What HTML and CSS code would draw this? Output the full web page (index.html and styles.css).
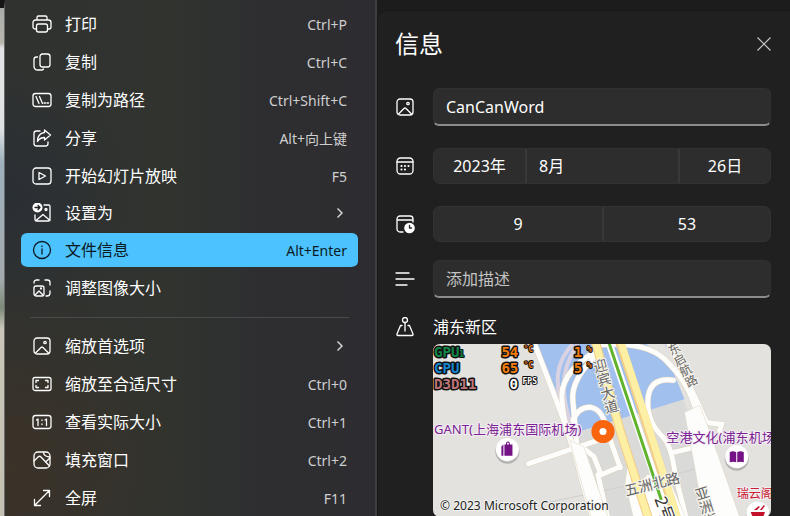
FILE: index.html
```
<!DOCTYPE html>
<html lang="zh-CN">
<head>
<meta charset="utf-8">
<title>信息</title>
<link rel="stylesheet" href="styles.css">
</head>
<body>
<div class="app">
  <div class="photo-edge"></div>
  <nav class="menu">
    <button class="item"><svg class="icon" viewBox="0 0 20 20"><path d="M5 6V3.500a1.500 1.500 0 0 1 1.500-1.500h7A1.500 1.500 0 0 1 15 3.500V6M4.500 15H3a2 2 0 0 1-2-2V8.500A2.500 2.500 0 0 1 3.500 6h13A2.500 2.500 0 0 1 19 8.500V13a2 2 0 0 1-2 2h-1.500"/><rect x="4.500" y="10" width="11" height="8" rx="2"/></svg><span class="label">打印</span><span class="key">Ctrl+P</span></button>
    <button class="item"><svg class="icon" viewBox="0 0 20 20"><rect x="8" y="2" width="10" height="13" rx="2.500"/><path d="M5.500 5H4.500A2.500 2.500 0 0 0 2 7.500V14.500A3.500 3.500 0 0 0 5.500 18H9a2.500 2.500 0 0 0 2.500-1"/></svg><span class="label">复制</span><span class="key">Ctrl+C</span></button>
    <button class="item"><svg class="icon" viewBox="0 0 20 20"><rect x="1" y="3.500" width="18" height="13" rx="2.500"/><path d="M4 6.500l3 7M7.500 6.500l3 7M12 13h1.500M15 13h1.500"/></svg><span class="label">复制为路径</span><span class="key">Ctrl+Shift+C</span></button>
    <button class="item"><svg class="icon" viewBox="0 0 20 20"><path d="M8 3H4.500A2.500 2.500 0 0 0 2 5.500v10A2.500 2.500 0 0 0 4.500 18h9a2.500 2.500 0 0 0 2.500-2.500V14"/><path d="M12.500 2l6 5-6 5V9.500C9 9.500 7 11 5.500 13.500 5.500 8 8.500 5 12.500 4.500z"/></svg><span class="label">分享</span><span class="key">Alt+向上键</span></button>
    <button class="item"><svg class="icon" viewBox="0 0 20 20"><rect x="1" y="2" width="18" height="16" rx="3"/><path d="M7 6.500v7l6.500-3.500z"/></svg><span class="label">开始幻灯片放映</span><span class="key">F5</span></button>
    <button class="item item-short"><svg class="icon" viewBox="0 0 20 20"><path d="M12 2h4.500A1.500 1.500 0 0 1 18 3.500v13a1.500 1.500 0 0 1-1.500 1.500h-12A1.500 1.500 0 0 1 3 16.500V12M4 17.500l7-6 7 6"/><circle cx="14" cy="6.500" r="1"/><circle class="fill" cx="5.500" cy="4.500" r="5"/><path class="cut" d="M3 4.500h5M6 2.500l2 2-2 2"/></svg><span class="label">设置为</span><svg class="chevron" viewBox="0 0 8 12"><path d="M1.500 1.500L6 6l-4.500 4.500"/></svg></button>
    <button class="item item-active"><svg class="icon" viewBox="0 0 20 20"><circle cx="10" cy="10" r="8.500"/><path d="M10 9v5M10 6v.5"/></svg><span class="label">文件信息</span><span class="key">Alt+Enter</span></button>
    <button class="item"><svg class="icon" viewBox="0 0 20 20"><path d="M2 5V4A2.500 2.500 0 0 1 4.500 2H7M13 2h2.500A2.500 2.500 0 0 1 18 4.500V7M18 13v2a3 3 0 0 1-3 3h-1"/><rect x="2" y="8" width="10" height="10" rx="2"/><path d="M3 17l4-4 4 4"/><circle cx="9" cy="10.500" r=".5"/></svg><span class="label">调整图像大小</span></button>
    <hr class="rule">
    <button class="item"><svg class="icon" viewBox="0 0 20 20"><rect x="2" y="2" width="16" height="16" rx="3"/><path d="M3.500 17l5.500-5.500q1-1 2 0l5.500 5.500"/><circle cx="13" cy="6.500" r="1.200"/></svg><span class="label">缩放首选项</span><svg class="chevron" viewBox="0 0 8 12"><path d="M1.500 1.500L6 6l-4.500 4.500"/></svg></button>
    <button class="item"><svg class="icon" viewBox="0 0 20 20"><rect x="1" y="3.500" width="18" height="13" rx="2"/><path d="M4 8.500V6.500h2.500M13.500 6.500H16v2M16 11.500v2h-2.500M6.500 13.500H4v-2"/></svg><span class="label">缩放至合适尺寸</span><span class="key">Ctrl+0</span></button>
    <button class="item"><svg class="icon" viewBox="0 0 20 20"><rect x="1" y="3.500" width="18" height="13" rx="2.500"/><path d="M4.500 8l1.500-1v6.500M13 8l1.500-1v6.500M10 8v.5M10 12v.5"/></svg><span class="label">查看实际大小</span><span class="key">Ctrl+1</span></button>
    <button class="item"><svg class="icon" viewBox="0 0 20 20"><rect x="2" y="2" width="16" height="16" rx="4"/><path d="M2 11l4-4q1.500-1.500 3 0l8.500 9M11.500 2.500q.5 4 6 4.500M13.500 12l4.500-4"/></svg><span class="label">填充窗口</span><span class="key">Ctrl+2</span></button>
    <button class="item"><svg class="icon" viewBox="0 0 20 20"><path d="M2.500 17.500l15-15M11.500 2.500h6v6M2.500 11.500v6h6"/></svg><span class="label">全屏</span><span class="key">F11</span></button>
  </nav>
  <main class="stage">
    <section class="panel">
      <header class="head">
        <h1 class="title">信息</h1>
        <button class="close" aria-label="关闭"><svg class="cross" viewBox="0 0 14 14"><path d="M.5.5l13 13M13.500.5l-13 13"/></svg></button>
      </header>
      <div class="row">
        <label for="name" class="mark"><svg class="icon" viewBox="0 0 20 20"><rect x="2" y="2" width="16" height="16" rx="3"/><path d="M3.500 17l5.500-5.500q1-1 2 0l5.500 5.500"/><circle cx="13" cy="6.500" r="1.200"/></svg></label>
        <input id="name" class="field" type="text" value="CanCanWord">
      </div>
      <div class="row">
        <span class="mark"><svg class="icon" viewBox="0 0 20 20"><rect x="2" y="2" width="16" height="16" rx="3.500"/><path d="M2 6h16"/><path class="dots" d="M6.500 10h0M10 10h0M13.500 10h0M6.500 13.500h0M10 13.500h0"/></svg></span>
        <div class="picker date"><button class="part">2023年</button><button class="part part-start">8月</button><button class="part">26日</button></div>
      </div>
      <div class="row">
        <span class="mark"><svg class="icon" viewBox="0 0 20 20"><path d="M8 18H5a3 3 0 0 1-3-3V5a3 3 0 0 1 3-3h10a3 3 0 0 1 3 3v3M2 6h16"/><circle class="fill" cx="14.500" cy="14" r="5.300"/><path class="cut" d="M14.500 11.500V14h2"/></svg></span>
        <div class="picker time"><button class="part">9</button><button class="part">53</button></div>
      </div>
      <div class="row row-tight">
        <label for="desc" class="mark"><svg class="icon" viewBox="0 0 20 20"><path d="M1 4h13M1 10h18M1 16h11"/></svg></label>
        <input id="desc" class="field" type="text" placeholder="添加描述">
      </div>
      <div class="row place-row">
        <span class="mark"><svg class="icon" viewBox="0 0 20 20"><circle cx="10" cy="3" r="2.500"/><path d="M10 5.500V14M7 8.500H5.500L2 17q-.4 1.500 1 1.500h14q1.400 0 1-1.500L14.500 8.500H13"/></svg></span>
        <span class="place">浦东新区</span>
      </div>
      <div class="map">
        <svg class="map-art" viewBox="433 344 338 172" preserveAspectRatio="xMinYMin slice">
          <rect class="land" x="433" y="344" width="338" height="172"/>
          <path class="block" d="M575 431L682 399L700 450L722 516H592z"/>
          <path class="water" d="M534 344H645L668 362L683 399L575 432z"/>
          <path class="lane" d="M545 502L640 482M668 475L706 465"/>
          <g class="lilac"><path d="M572 344Q557 360 557 380T567 425M577 344Q563 364 563 385T571 425"/><path d="M664 344Q678 360 685 382"/></g>
          <g class="edge">
            <path d="M534 344Q556 400 572 445L582 483L592 518"/>
            <path d="M597 350Q562 370 561 395Q561 415 571 445M598 353Q570 378 572 400L576 445M572 420Q578 406 590 407Q602 409 606 430L619 467"/>
            <path d="M528 463L602 438M583 448L593 456L600 474L619 466M597 474L607 518"/>
            <path d="M598 345Q650 340 669 365Q690 386 697 420M672 380Q650 377 647 396Q644 420 662 437Q670 445 674 475L685 518M668 344L695 400L705 422L720 424L718 430M671 452L696 446"/>
          </g>
          <g class="road">
            <path d="M534 344Q556 400 572 445L582 483L592 518"/>
            <path d="M597 350Q562 370 561 395Q561 415 571 445M598 353Q570 378 572 400L576 445M572 420Q578 406 590 407Q602 409 606 430L619 467"/>
            <path d="M528 463L602 438M583 448L593 456L600 474L619 466M597 474L607 518"/>
            <path d="M598 345Q650 340 669 365Q690 386 697 420M672 380Q650 377 647 396Q644 420 662 437Q670 445 674 475L685 518M668 344L695 400L705 422L720 424L718 430M671 452L696 446"/>
          </g>
          <path class="wide" d="M569 440L583 446L607 516H590zM683 412L698 405L706 425L738 516H702L692 460zM627 460L632 490L646 474L666 474L684 516H632L624 482z"/>
          <path class="casing" d="M607 340L664 507"/>
          <path class="amber" d="M594 340L619 430L648 520M618 340L641 410L676 520"/>
          <path class="yellow" d="M594 340L619 430L648 520"/>
          <path class="yellow" d="M619 340L642 410L677 520"/>
          <path class="green" d="M607 340L660 499"/>
          <text class="street street-large stack" transform="translate(597 359) rotate(-15)">迎宾大道</text>
          <text class="street stack" transform="translate(669 344) rotate(-28)">东启航路</text>
          <text class="street street-large" transform="translate(625 495) rotate(-14)">五洲北路</text>
          <text class="street street-large stack" transform="translate(698 486) rotate(-17)">亚洲街</text>
          <text class="route" transform="translate(653 498) rotate(70)">2号</text>
          <text class="poi" x="434" y="433">GANT(上海浦东国际机场)</text>
          <text class="poi" x="665" y="441">空港文化(浦东机场</text>
          <text class="poi poi-red" x="735" y="497">瑞云阁</text>
          <circle class="shade" cx="507" cy="451" r="12"/><circle class="pin" cx="507" cy="449" r="11.500"/>
          <path class="plum" d="M501 446l2-2v11h-2zM504 444h1.500q0-3 2-3t2 3H512v11h-8zM506.500 444h2q0-2-1-2t-1 2z"/>
          <circle class="shade" cx="735" cy="458" r="12"/><circle class="pin" cx="735" cy="456" r="11.500"/>
          <path class="plum" d="M728 451.500q3-1.500 6.500 0v10q-3-1-6.500 0zM735.500 451.500q3-1.500 6.500 0v10q-3-1-6.500 0z"/>
          <circle class="shade" cx="756" cy="514" r="12"/><circle class="pin" cx="756" cy="512" r="11.500"/>
          <path class="bowl" d="M749 511h14q-1 5-4 6h-6q-3-1-4-6zM752 509l5-4 1 1-3 3zM758 509l4-5 1 1-3 4z"/>
          <circle class="here" cx="602" cy="431" r="11.500"/><circle class="pin" cx="602" cy="431" r="3.500"/>
          <g class="osd">
            <text class="gpu" x="434" y="357">GPU</text><text class="gpu tiny" x="459" y="357">1</text>
            <text class="hot" x="501" y="357">54</text><text class="hot tiny" x="523" y="352">°C</text>
            <text class="hot" x="573" y="357">1</text><text class="hot tiny" x="586" y="352">%</text>
            <text class="cpu" x="434" y="373">CPU</text>
            <text class="hot" x="501" y="373">65</text><text class="hot tiny" x="523" y="368">°C</text>
            <text class="hot" x="573" y="373">5</text><text class="hot tiny" x="586" y="368">%</text>
            <text class="api" x="434" y="389">D3D11</text>
            <text class="fps" x="509" y="389">0</text><text class="fps tiny" x="522" y="384">FPS</text>
          </g>
          <text class="credit" x="440" y="509">© 2023 Microsoft Corporation</text>
        </svg>
      </div>
    </section>
  </main>
</div>
</body>
</html>
```
FILE: styles.css
```
* { box-sizing: border-box; }
body {
  margin: 0;
  background: #1c1c1c;
  color: #fff;
  font-family: "Noto Sans", "Noto Sans CJK SC", sans-serif;
  font-size: 16px;
  overflow: hidden;
}
button, input { font: inherit; color: inherit; border: 0; margin: 0; }
.app { display: grid; grid-template-columns: 5px 372px 1fr; height: 100vh; }
.photo-edge {
  border-top: 8px solid #151515;
  border-right: 1px solid #6a6b6a;
  background: linear-gradient(#a9adaa, #b8b8ae 35px, #e2e3e4 40px, #dfe2e4 120px, #9db0bd 155px, #a4abae 270px, #7d8b78 300px, #c9c5b8 320px, #c5c1b2);
}
.menu {
  display: flex;
  flex-direction: column;
  padding: 5px 17px 0 16px;
  border-right: 2px solid #3f3f43;
  background:
    radial-gradient(circle at 0 90%, #3b3228, transparent 190px),
    radial-gradient(circle at 0 38%, #2a2f35, transparent 130px),
    linear-gradient(90deg, #303230, #30332e 45%, #2e2e31 70%, #2d2d31);
}
.item {
  display: flex;
  flex: none;
  align-items: center;
  gap: 13px;
  height: 38px;
  padding: 0 11px;
  border-block: 2px solid transparent;
  border-radius: 7px;
  background: none;
  background-clip: padding-box;
  text-align: left;
}
.item-short { height: 36px; }
.item-active { background-color: #4cc2ff; color: #0b1a24; }
.label { flex: 1; line-height: 24px; }
.key { padding-top: 2px; color: #cfcfcf; font-size: 14px; line-height: 20px; }
.item-active .key { color: #0b1a24; }
.icon {
  flex: none;
  width: 20px;
  height: 20px;
  fill: none;
  stroke: currentColor;
  stroke-width: 1.3;
  stroke-linecap: round;
  stroke-linejoin: round;
}
.icon .fill { fill: #fff; stroke: none; }
.icon .cut { stroke: #222; }
.icon .dots { stroke-width: 2.2; }
.chevron { width: 8px; height: 12px; margin-right: 3px; fill: none; stroke: #ddd; stroke-width: 1.4; }
.rule { flex: none; height: 1px; margin: 10px 9px 9px; border: 0; background: #48494a; }
.stage { display: flex; padding-top: 10px; }
.panel {
  flex: 1;
  min-width: 0;
  padding: 15px 19px 0 17px;
  border-top: 1px solid #171717;
  border-left: 1px solid #171717;
  border-top-left-radius: 9px;
  background: #202020;
}
.head { display: flex; align-items: center; justify-content: space-between; height: 36px; margin-bottom: 26px; }
.title { margin: 0; font-size: 24px; font-weight: 400; line-height: 36px; }
.close { display: flex; padding: 0; background: none; }
.cross { width: 14px; height: 14px; fill: none; stroke: #c8c8c8; stroke-width: 1.2; }
.row { display: flex; align-items: center; gap: 18px; margin-bottom: 22px; }
.row:has(.time) { margin-bottom: 18px; }
.mark { display: flex; }
.field {
  flex: 1;
  min-width: 0;
  height: 38px;
  padding: 0 12px;
  border: 1px solid #303030;
  border-bottom: 2px solid #8c8c8c;
  border-radius: 6px;
  background: #2d2d2d;
}
.field::placeholder { color: #c4c4c4; opacity: 1; }
.picker { flex: 1; display: grid; height: 36px; border: 1px solid #323232; border-radius: 7px; background: #2d2d2d; }
.date { grid-template-columns: 91px 1fr 92px; }
.time { grid-template-columns: 1fr 1fr; }
.part { padding: 0 12px; background: none; line-height: 24px; }
.part + .part { border-left: 2px solid #383838; }
.part-start { text-align: left; }
.row-tight { margin-bottom: 16px; }
.place-row { margin-bottom: 4px; }
.place { line-height: 26px; }
.map { margin-left: 38px; height: 173px; border-radius: 7px; overflow: hidden; }
.map-art { display: block; width: 100%; height: 100%; }
.land { fill: #e3e2df; }
.block { fill: #dadad9; }
.water { fill: #a2c0ed; }
.lane { fill: none; stroke: #cfcfcd; }
.lilac { fill: none; stroke: #d9d2e3; stroke-width: 4; }
.edge { fill: none; stroke: #ddd2bd; stroke-width: 6; stroke-linecap: round; }
.road { fill: none; stroke: #fdfdfc; stroke-width: 5; stroke-linecap: round; }
.wide { fill: #fdfdfc; stroke: #ddd2bd; stroke-width: .5; }
.casing { fill: none; stroke: #fff; stroke-width: 7; }
.amber { fill: none; stroke: #f3cd87; stroke-width: 9; }
.yellow { fill: none; stroke: #fdf0a4; stroke-width: 7; }
.green { fill: none; stroke: #62b32c; stroke-width: 3; }
.street { fill: #666; stroke: #f6f4ec; stroke-width: 2; paint-order: stroke; font-size: 12px; }
.street-large { font-size: 14px; }
.stack { writing-mode: vertical-rl; }
.route { fill: #333; stroke: #fff; stroke-width: 2; paint-order: stroke; font-size: 17px; }
.poi { fill: #7b2392; stroke: #f3eef4; stroke-width: 2; paint-order: stroke; font-size: 13px; }
.poi-red { fill: #c8202f; font-size: 12px; }
.shade { fill: #0003; }
.pin { fill: #fff; }
.plum { fill: #741286; fill-rule: evenodd; }
.bowl { fill: #c3102b; }
.here { fill: #f9650f; }
.osd { font-family: "DejaVu Sans Mono", monospace; font-size: 14px; font-weight: 700; stroke: #111; stroke-width: 3; stroke-linejoin: round; paint-order: stroke; }
.osd .tiny { font-size: 8px; stroke-width: 2; }
.gpu { fill: #118547; }
.cpu { fill: #1685d0; }
.hot { fill: #f47d0d; }
.api { fill: #bc7477; }
.fps { fill: #fff; }
.credit { fill: #222; font-size: 12px; stroke: #f2f2f0; stroke-width: 2; paint-order: stroke; }
```
